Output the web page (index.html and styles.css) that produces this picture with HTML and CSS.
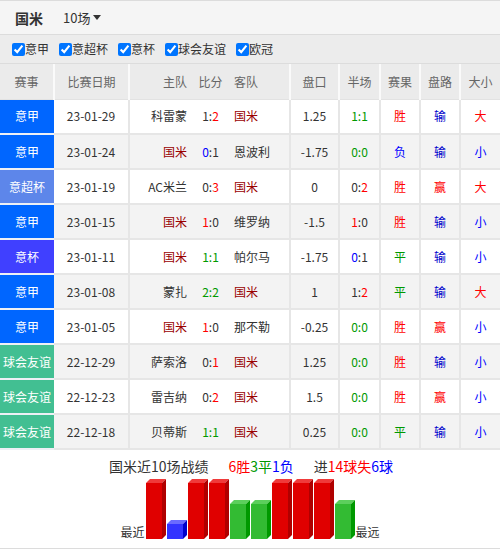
FILE: index.html
```html
<!DOCTYPE html>
<html lang="zh">
<head>
<meta charset="utf-8">
<link rel="stylesheet" href="styles.css">
</head>
<body>
<div class="wrap">
  <div class="topbar">
    <span class="team">国米</span>
    <span class="sel">10场<i class="caret"></i></span>
  </div>
  <div class="filters">
    <label class="chk"><input type="checkbox" checked>意甲</label>
    <label class="chk"><input type="checkbox" checked>意超杯</label>
    <label class="chk"><input type="checkbox" checked>意杯</label>
    <label class="chk"><input type="checkbox" checked>球会友谊</label>
    <label class="chk"><input type="checkbox" checked>欧冠</label>
  </div>
  <table class="tbl">
    <colgroup>
      <col class="c-lg"><col class="c-dt"><col class="c-h"><col class="c-s"><col class="c-a"><col class="c-pk"><col class="c-hf"><col class="c-r"><col class="c-pl"><col class="c-ou">
    </colgroup>
    <thead>
      <tr>
        <th class="sep">赛事</th><th class="sep">比赛日期</th><th class="home">主队</th><th>比分</th><th class="away sep">客队</th><th class="sep">盘口</th><th class="sep">半场</th><th class="sep">赛果</th><th class="sep">盘路</th><th>大小</th>
      </tr>
    </thead>
    <tbody>
      <tr>
        <td class="lg yj">意甲</td><td class="sep">23-01-29</td><td class="home">科雷蒙</td><td>1:<span class="r">2</span></td><td class="away sep"><span class="me">国米</span></td><td class="sep">1.25</td><td class="sep"><span class="g">1:1</span></td><td class="sep r">胜</td><td class="sep b2">输</td><td class="r">大</td>
      </tr>
      <tr>
        <td class="lg yj">意甲</td><td class="sep">23-01-24</td><td class="home"><span class="me">国米</span></td><td><span class="b">0</span>:1</td><td class="away sep">恩波利</td><td class="sep">-1.75</td><td class="sep"><span class="g">0:0</span></td><td class="sep b">负</td><td class="sep b2">输</td><td class="b">小</td>
      </tr>
      <tr>
        <td class="lg ycb">意超杯</td><td class="sep">23-01-19</td><td class="home">AC米兰</td><td>0:<span class="r">3</span></td><td class="away sep"><span class="me">国米</span></td><td class="sep">0</td><td class="sep">0:<span class="r">2</span></td><td class="sep r">胜</td><td class="sep r">赢</td><td class="r">大</td>
      </tr>
      <tr>
        <td class="lg yj">意甲</td><td class="sep">23-01-15</td><td class="home"><span class="me">国米</span></td><td><span class="r">1</span>:0</td><td class="away sep">维罗纳</td><td class="sep">-1.5</td><td class="sep"><span class="r">1</span>:0</td><td class="sep r">胜</td><td class="sep b2">输</td><td class="b">小</td>
      </tr>
      <tr>
        <td class="lg yb">意杯</td><td class="sep">23-01-11</td><td class="home"><span class="me">国米</span></td><td><span class="g">1:1</span></td><td class="away sep">帕尔马</td><td class="sep">-1.75</td><td class="sep"><span class="b">0</span>:1</td><td class="sep g">平</td><td class="sep b2">输</td><td class="b">小</td>
      </tr>
      <tr>
        <td class="lg yj">意甲</td><td class="sep">23-01-08</td><td class="home">蒙扎</td><td><span class="g">2:2</span></td><td class="away sep"><span class="me">国米</span></td><td class="sep">1</td><td class="sep">1:<span class="r">2</span></td><td class="sep g">平</td><td class="sep b2">输</td><td class="r">大</td>
      </tr>
      <tr>
        <td class="lg yj">意甲</td><td class="sep">23-01-05</td><td class="home"><span class="me">国米</span></td><td><span class="r">1</span>:0</td><td class="away sep">那不勒</td><td class="sep">-0.25</td><td class="sep"><span class="g">0:0</span></td><td class="sep r">胜</td><td class="sep r">赢</td><td class="b">小</td>
      </tr>
      <tr>
        <td class="lg qy">球会友谊</td><td class="sep">22-12-29</td><td class="home">萨索洛</td><td>0:<span class="r">1</span></td><td class="away sep"><span class="me">国米</span></td><td class="sep">1.25</td><td class="sep"><span class="g">0:0</span></td><td class="sep r">胜</td><td class="sep b2">输</td><td class="b">小</td>
      </tr>
      <tr>
        <td class="lg qy">球会友谊</td><td class="sep">22-12-23</td><td class="home">雷吉纳</td><td>0:<span class="r">2</span></td><td class="away sep"><span class="me">国米</span></td><td class="sep">1.5</td><td class="sep"><span class="g">0:0</span></td><td class="sep r">胜</td><td class="sep r">赢</td><td class="b">小</td>
      </tr>
      <tr>
        <td class="lg qy">球会友谊</td><td class="sep">22-12-18</td><td class="home">贝蒂斯</td><td><span class="g">1:1</span></td><td class="away sep"><span class="me">国米</span></td><td class="sep">0.25</td><td class="sep"><span class="g">0:0</span></td><td class="sep g">平</td><td class="sep b2">输</td><td class="b">小</td>
      </tr>
    </tbody>
  </table>
  <div class="summary">
    <div class="sum-text">
      <span class="grp">国米近10场战绩</span>
      <span class="grp"><span class="r">6胜</span><span class="g">3平</span><span class="b">1负</span></span>
      <span class="grp">进<span class="r">14球失</span><span class="b">6球</span></span>
    </div>
    <div class="chart">
      <span class="lbl">最近</span>
      <div class="bars">
        <svg class="bar" width="20" height="60" viewBox="0 0 20 60"><polygon class="top rd" points="0,4 4,0 20,0 16,4"/><rect class="front rd" x="0" y="4" width="16" height="56"/><polygon class="side rd" points="16,4 20,0 20,56 16,60"/></svg>
        <svg class="bar" width="20" height="19" viewBox="0 0 20 19"><polygon class="top bl" points="0,4 4,0 20,0 16,4"/><rect class="front bl" x="0" y="4" width="16" height="15"/><polygon class="side bl" points="16,4 20,0 20,15 16,19"/></svg>
        <svg class="bar" width="20" height="60" viewBox="0 0 20 60"><polygon class="top rd" points="0,4 4,0 20,0 16,4"/><rect class="front rd" x="0" y="4" width="16" height="56"/><polygon class="side rd" points="16,4 20,0 20,56 16,60"/></svg>
        <svg class="bar" width="20" height="60" viewBox="0 0 20 60"><polygon class="top rd" points="0,4 4,0 20,0 16,4"/><rect class="front rd" x="0" y="4" width="16" height="56"/><polygon class="side rd" points="16,4 20,0 20,56 16,60"/></svg>
        <svg class="bar" width="20" height="39" viewBox="0 0 20 39"><polygon class="top gr" points="0,4 4,0 20,0 16,4"/><rect class="front gr" x="0" y="4" width="16" height="35"/><polygon class="side gr" points="16,4 20,0 20,35 16,39"/></svg>
        <svg class="bar" width="20" height="39" viewBox="0 0 20 39"><polygon class="top gr" points="0,4 4,0 20,0 16,4"/><rect class="front gr" x="0" y="4" width="16" height="35"/><polygon class="side gr" points="16,4 20,0 20,35 16,39"/></svg>
        <svg class="bar" width="20" height="60" viewBox="0 0 20 60"><polygon class="top rd" points="0,4 4,0 20,0 16,4"/><rect class="front rd" x="0" y="4" width="16" height="56"/><polygon class="side rd" points="16,4 20,0 20,56 16,60"/></svg>
        <svg class="bar" width="20" height="60" viewBox="0 0 20 60"><polygon class="top rd" points="0,4 4,0 20,0 16,4"/><rect class="front rd" x="0" y="4" width="16" height="56"/><polygon class="side rd" points="16,4 20,0 20,56 16,60"/></svg>
        <svg class="bar" width="20" height="60" viewBox="0 0 20 60"><polygon class="top rd" points="0,4 4,0 20,0 16,4"/><rect class="front rd" x="0" y="4" width="16" height="56"/><polygon class="side rd" points="16,4 20,0 20,56 16,60"/></svg>
        <svg class="bar" width="20" height="39" viewBox="0 0 20 39"><polygon class="top gr" points="0,4 4,0 20,0 16,4"/><rect class="front gr" x="0" y="4" width="16" height="35"/><polygon class="side gr" points="16,4 20,0 20,35 16,39"/></svg>
      </div>
      <span class="lbl">最远</span>
    </div>
  </div>
</div>
</body>
</html>
```

FILE: styles.css
```css
* { box-sizing: border-box; }
html, body { margin: 0; padding: 0; background: #fff; }
body {
  font-family: "Noto Sans CJK SC", "Noto Sans", sans-serif;
  font-size: 12px;
  color: #333;
}
.wrap {
  width: 500px;
  border-top: 1px solid #dcdcdc;
  border-bottom: 1px solid #dcdcdc;
}
.topbar {
  height: 34px;
  background: #f5f5f5;
  border-bottom: 1px solid #dcdcdc;
  display: flex;
  align-items: center;
  padding-left: 15px;
}
.team { font-size: 14px; font-weight: bold; color: #333; width: 48px; }
.sel { font-size: 13px; color: #333; display: inline-flex; align-items: center; }
.caret {
  display: inline-block;
  width: 0; height: 0;
  border-left: 4px solid transparent;
  border-right: 4px solid transparent;
  border-top: 5px solid #333;
  margin-left: 3px;
}
.filters {
  height: 29px;
  background: #ececec;
  border-bottom: 1px solid #dcdcdc;
  display: flex;
  align-items: center;
  padding-left: 12px;
}
.chk {
  display: inline-flex;
  align-items: center;
  margin-right: 10px;
  color: #333;
  font-size: 12px;
  line-height: 16px;
}
.chk input { margin: 0; width: 13px; height: 13px; }
.tbl {
  width: 500px;
  table-layout: fixed;
  border-collapse: collapse;
}
.c-lg { width: 54px; } .c-dt { width: 75px; } .c-h { width: 64px; } .c-s { width: 35px; }
.c-a { width: 62px; } .c-pk { width: 49px; } .c-hf { width: 41px; } .c-r { width: 40px; }
.c-pl { width: 40px; } .c-ou { width: 40px; }
.tbl th {
  height: 35px;
  background: #ebebeb;
  color: #666;
  font-weight: normal;
  font-size: 12px;
  text-align: center;
  padding: 0;
  border-bottom: 1px solid #e2e2e2;
}
.tbl th.sep { border-right: 2px solid #fafafa; }
.tbl td {
  height: 35px;
  text-align: center;
  padding: 0;
  white-space: nowrap;
  overflow: hidden;
  border-bottom: 2px solid #e6e6e6;
  line-height: 16px;
  font-size: 12px;
}
.tbl td.sep { border-right: 2px solid #e6e6e6; }
.tbl tbody tr:nth-child(even) td { background: #f3f3f3; }
.tbl .home { text-align: right; padding-right: 6px; }
.tbl .away { text-align: left; padding-left: 6px; }
.tbl tbody td.lg { color: #fff; border-bottom-color: #eef0f5; }
.tbl tbody tr td.yj { background: #0066ff; }
.tbl tbody tr td.ycb { background: #5d86ea; }
.tbl tbody tr td.yb { background: #4040ff; }
.tbl tbody tr td.qy { background: #42bf92; }
.me { color: #990000; }
.r { color: #ff0000; }
.b { color: #0000ff; }
.b2 { color: #0000cc; }
.g { color: #009900; }
.summary {
  padding-top: 8px;
  height: 98px;
}
.sum-text {
  display: flex;
  justify-content: center;
  font-size: 14px;
  line-height: 17px;
  gap: 20px;
  padding-left: 2px;
}
.chart {
  margin-top: 4px;
  display: flex;
  justify-content: center;
  align-items: flex-end;
  height: 60px;
}
.lbl { font-size: 12px; line-height: 14px; color: #333; }
.bars { display: flex; align-items: flex-end; gap: 1px; margin: 0 1px; }
.bar { display: block; }
.front.rd { fill: #e00000; } .top.rd { fill: #f03a3a; } .side.rd { fill: #b00000; }
.front.gr { fill: #33bb33; } .top.gr { fill: #5ccf5c; } .side.gr { fill: #009900; }
.front.bl { fill: #3333ff; } .top.bl { fill: #6a6aff; } .side.bl { fill: #0000cc; }
```
